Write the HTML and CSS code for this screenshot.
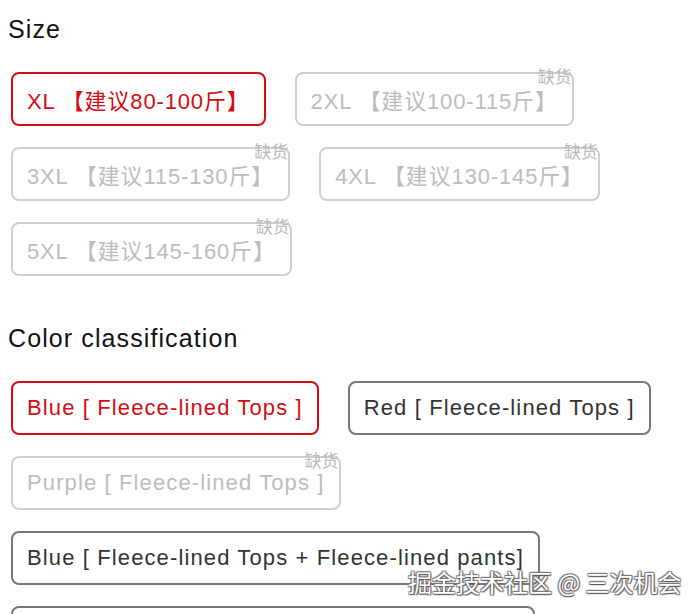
FILE: index.html
```html
<!DOCTYPE html>
<html lang="zh">
<head>
<meta charset="utf-8">
<link rel="stylesheet" href="styles.css">
</head>
<body>
<div class="page">
  <section class="group">
    <h2 class="title">Size</h2>
    <div class="chips">
      <div class="chip active">XL 【建议80-100斤】</div>
      <div class="chip disabled">2XL 【建议100-115斤】<span class="tag">缺货</span></div>
      <div class="chip disabled">3XL 【建议115-130斤】<span class="tag">缺货</span></div>
      <div class="chip disabled">4XL 【建议130-145斤】<span class="tag">缺货</span></div>
      <div class="chip disabled">5XL 【建议145-160斤】<span class="tag">缺货</span></div>
    </div>
  </section>
  <section class="group">
    <h2 class="title">Color classification</h2>
    <div class="chips latin">
      <div class="chip active">Blue [ Fleece-lined Tops ]</div>
      <div class="chip">Red [ Fleece-lined Tops ]</div>
      <div class="chip disabled">Purple [ Fleece-lined Tops ]<span class="tag">缺货</span></div>
      <div class="chip">Blue [ Fleece-lined Tops + Fleece-lined pants]</div>
      <div class="chip">Red [ Fleece-lined Tops + Fleece-lined pants]</div>
    </div>
  </section>
</div>
<div class="watermark">掘金技术社区 @ 三次机会</div>
</body>
</html>
```
FILE: styles.css
```css
html, body {
  margin: 0;
  padding: 0;
  background: #fff;
  overflow: hidden;
}
body {
  font-family: "Liberation Sans", "Noto Sans CJK SC", sans-serif;
  color: #222;
}
.page {
  padding: 14px 8px 0 8px;
}
.group {
  margin-bottom: 47px;
}
.title {
  margin: 0;
  font-weight: normal;
  font-size: 25px;
  line-height: 30px;
  letter-spacing: 1.1px;
  color: #111;
}
.chips {
  display: flex;
  flex-wrap: wrap;
  column-gap: 29px;
  row-gap: 21px;
  padding-left: 3px;
  margin-top: 28px;
}
.chip {
  position: relative;
  box-sizing: border-box;
  height: 54px;
  padding: 0 14px;
  display: flex;
  align-items: center;
  font-size: 22px;
  letter-spacing: 0.85px;
  color: #333;
  border: 2px solid #777;
  border-radius: 8px;
  white-space: pre;
}
.latin .chip {
  letter-spacing: 1.12px;
}
.chip.active {
  color: #d40d12;
  border-color: #d40d12;
}
.chip.disabled {
  color: #bdbdbd;
  border-color: #d0d0d0;
}
.tag {
  position: absolute;
  top: -8px;
  right: 0;
  font-size: 17px;
  line-height: 20px;
  letter-spacing: 0;
  color: #bbb;
  font-family: "Noto Sans CJK SC", sans-serif;
}
.watermark {
  position: absolute;
  left: 408px;
  top: 564px;
  font-family: "Noto Sans CJK SC", sans-serif;
  font-size: 24px;
  color: #fff;
  text-shadow: 1px 1px 1px #555, -1px -1px 1px #777, 1px -1px 1px #777, -1px 1px 1px #777;
}
```
